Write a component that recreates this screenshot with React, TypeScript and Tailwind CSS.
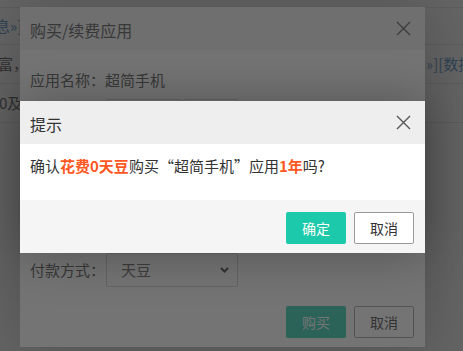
import React from "react";

const font = { fontFamily: '"Noto Sans CJK SC", "Noto Sans", sans-serif' };

function CloseX({ className = "" }: { className?: string }) {
  return (
    <svg width="15" height="15" viewBox="0 0 15 15" className={className}>
      <path d="M1 1 L14 14 M14 1 L1 14" stroke="currentColor" strokeWidth="1.4" fill="none" />
    </svg>
  );
}

function Chevron() {
  return (
    <svg width="9" height="6" viewBox="0 0 9 6">
      <path d="M1 1 L4.5 4.5 L8 1" stroke="#333" strokeWidth="2" fill="none" />
    </svg>
  );
}

export default function App() {
  return (
    <div className="relative w-[463px] h-[351px] overflow-hidden bg-white text-[#333]" style={font}>
      {/* page behind */}
      <div className="flex flex-col pt-[7px] text-[15px]">
        <div className="h-[38px] border-t border-b border-[#e2e2e2] flex items-center overflow-hidden whitespace-nowrap">
          <span className="-ml-[5px] text-[#2f78c0]">息»]</span>
        </div>
        <div className="h-[39px] border-b border-[#e2e2e2] flex items-center overflow-hidden whitespace-nowrap">
          <span className="-ml-[2px]">富，</span>
          <div className="ml-auto w-[37px] overflow-hidden whitespace-nowrap">
            <span className="text-[#2f78c0]">»][数据分析»]</span>
          </div>
        </div>
        <div className="h-[39px] border-b border-[#e2e2e2] flex items-center overflow-hidden whitespace-nowrap">
          <span className="-ml-[1px]">0及</span>
        </div>
      </div>

      {/* first shade */}
      <div className="absolute inset-0 bg-black/20" />

      {/* back dialog */}
      <div className="absolute left-[20px] top-[7px] w-[405px] h-[340px] bg-white shadow-[1px_1px_50px_rgba(0,0,0,0.3)] flex flex-col">
        <div className="h-[43px] bg-[#eeeeee] flex items-center justify-between pl-[10px] pr-[14px]">
          <span className="text-[16px] text-[#444] pt-[3px]">购买/续费应用</span>
          <CloseX className="text-[#555]" />
        </div>
        <div className="flex-1 flex flex-col pl-[10px] pr-[11px] pt-[18px] text-[15px] text-[#444]">
          <div className="h-[24px] leading-[24px]">应用名称：超简手机</div>
          <div className="mt-[7px] flex flex-col gap-[4.5px]">
            <div className="h-[34px] flex items-center">
              <span className="w-[76px]">购买时长：</span>
              <div className="w-[76px] h-[34px] border border-[#ccc] rounded-[2px]" />
              <div className="ml-[1px] w-[55px] h-[34px] border border-[#ccc] rounded-[2px]" />
            </div>
            <div className="h-[34px] flex items-center">
              <span className="w-[76px]">应付金额：</span>
            </div>
            <div className="h-[34px] flex items-center">
              <span className="w-[76px]">账户余额：</span>
            </div>
            <div className="h-[34px] flex items-center">
              <span className="w-[76px]">有效期至：</span>
            </div>
            <div className="h-[34px] flex items-center">
              <span className="w-[76px]">付款方式：</span>
              <div className="w-[132px] h-[34px] border border-[#ccc] rounded-[2px] flex items-center justify-between pl-[14px] pr-[8px]">
                <span className="text-[#555]">天豆</span>
                <Chevron />
              </div>
            </div>
          </div>
          <div className="mt-auto pb-[9px] flex justify-end gap-[8px] text-[14px]">
            <button className="w-[60px] h-[32px] rounded-[2px] bg-[#1cc9aa] text-white">购买</button>
            <button className="w-[60px] h-[32px] rounded-[2px] border border-[#999] bg-white text-[#333]">取消</button>
          </div>
        </div>
      </div>

      {/* second shade */}
      <div className="absolute inset-0 bg-[rgba(50,50,50,0.68)]" />

      {/* front dialog */}
      <div className="absolute left-[20px] top-[101px] w-[405px] h-[152px] bg-white shadow-[1px_1px_50px_rgba(0,0,0,0.3)] flex flex-col">
        <div className="h-[43px] bg-[#eeeeee] flex items-center justify-between pl-[10px] pr-[14px]">
          <span className="text-[16px] text-[#333] pt-[3px]">提示</span>
          <CloseX className="text-[#555]" />
        </div>
        <div className="h-[56px] bg-white pl-[10px] pt-[10px] text-[15px] leading-[24px] text-[#333]">
          确认<span className="font-bold text-[#ff5722]">花费0天豆</span>购买“超简手机”应用<span className="font-bold text-[#ff5722]">1年</span>吗?
        </div>
        <div className="flex-1 bg-[#f5f5f5] flex justify-end items-start gap-[8px] pt-[12px] pr-[11px] text-[14px]">
          <button className="w-[60px] h-[32px] rounded-[2px] bg-[#1cc9aa] text-white">确定</button>
          <button className="w-[60px] h-[32px] rounded-[2px] border border-[#999] bg-white text-[#333]">取消</button>
        </div>
      </div>
    </div>
  );
}
